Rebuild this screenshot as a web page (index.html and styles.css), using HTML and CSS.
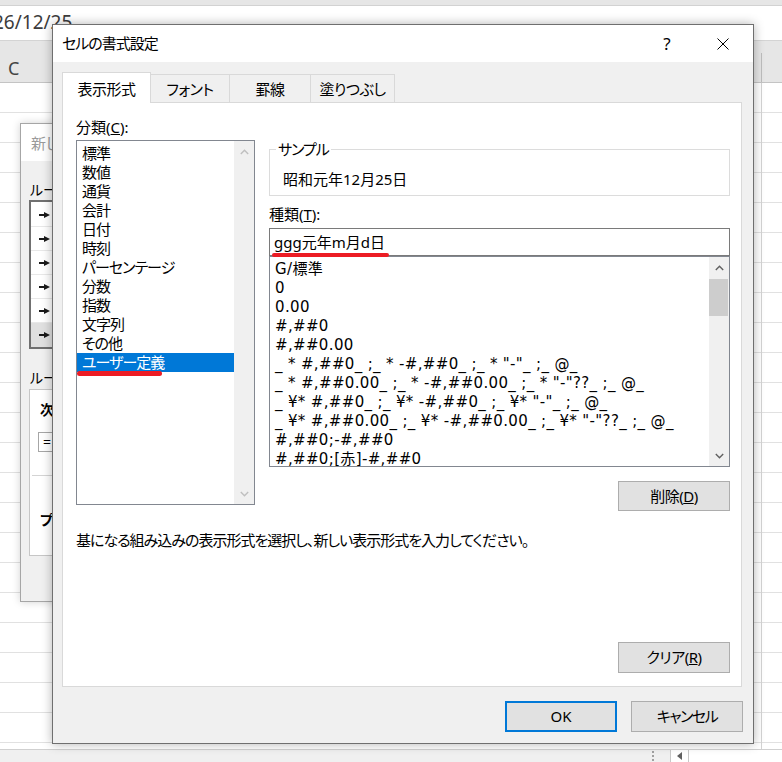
FILE: index.html
```html
<!DOCTYPE html>
<html lang="ja">
<head>
<meta charset="utf-8">
<title>セルの書式設定</title>
<link rel="stylesheet" href="styles.css">
</head>
<body>
<div class="sheet">
  <div class="topstrip"></div>
  <div class="formulabar"><span class="fx">26/12/25</span></div>
  <div class="colheader"><span class="colname">C</span></div>
  <div class="cells"></div>
  <div class="tabbar">
    <span class="splitter"><i></i><i></i><i></i></span>
    <span class="hs-btn"><svg width="5" height="8" viewBox="0 0 5 8"><path d="M5 0 L0 4 L5 8Z" fill="#606060"/></svg></span>
    <span class="hscroll"></span>
  </div>
</div>

<div class="bgdlg">
  <div class="bgdlg-title">新しい書式ルール</div>
  <div class="bgdlg-body">
    <div class="bg-label">ルールの種類を選択してください(<u>S</u>):</div>
    <ul class="rule-list">
      <li><svg class="rarrow" width="12" height="6" viewBox="0 0 12 6"><rect x="0" y="2" width="6" height="2"/><path d="M5 0 L11 3 L5 6Z"/></svg>セルの値に基づいてすべてのセルを書式設定</li>
      <li><svg class="rarrow" width="12" height="6" viewBox="0 0 12 6"><rect x="0" y="2" width="6" height="2"/><path d="M5 0 L11 3 L5 6Z"/></svg>指定の値を含むセルだけを書式設定</li>
      <li><svg class="rarrow" width="12" height="6" viewBox="0 0 12 6"><rect x="0" y="2" width="6" height="2"/><path d="M5 0 L11 3 L5 6Z"/></svg>上位または下位に入る値だけを書式設定</li>
      <li><svg class="rarrow" width="12" height="6" viewBox="0 0 12 6"><rect x="0" y="2" width="6" height="2"/><path d="M5 0 L11 3 L5 6Z"/></svg>平均より上または下の値だけを書式設定</li>
      <li><svg class="rarrow" width="12" height="6" viewBox="0 0 12 6"><rect x="0" y="2" width="6" height="2"/><path d="M5 0 L11 3 L5 6Z"/></svg>一意の値または重複する値だけを書式設定</li>
      <li class="sel"><svg class="rarrow" width="12" height="6" viewBox="0 0 12 6"><rect x="0" y="2" width="6" height="2"/><path d="M5 0 L11 3 L5 6Z"/></svg>数式を使用して、書式設定するセルを決定</li>
    </ul>
    <div class="bg-label second">ルールの内容を編集してください(<u>E</u>):</div>
    <div class="rule-edit">
      <div class="bold">次の数式を満たす場合に値を書式設定(<u>O</u>):</div>
      <div class="formula">=</div>
      <div class="divider"></div>
      <div class="bold preview">プレビュー:</div>
    </div>
  </div>
</div>

<div class="dlg">
  <div class="dlg-title">
    <span class="title-text">セルの書式設定</span>
    <span class="tb-btn help">?</span>
    <span class="tb-btn close"><svg width="12" height="12" viewBox="0 0 12 12"><path d="M0.5 0.5 L11.5 11.5 M11.5 0.5 L0.5 11.5" stroke="#000" stroke-width="1" fill="none"/></svg></span>
  </div>
  <div class="dlg-body">
    <div class="tabs">
      <div class="tab active">表示形式</div>
      <div class="tab">フォント</div>
      <div class="tab">罫線</div>
      <div class="tab">塗りつぶし</div>
    </div>
    <div class="panel">
      <div class="panel-top">
        <div class="cat-col">
          <div class="label">分類(<u>C</u>):</div>
          <div class="listbox cat-list">
            <ul class="items">
              <li>標準</li>
              <li>数値</li>
              <li>通貨</li>
              <li>会計</li>
              <li>日付</li>
              <li>時刻</li>
              <li>パーセンテージ</li>
              <li>分数</li>
              <li>指数</li>
              <li>文字列</li>
              <li>その他</li>
              <li class="sel">ユーザー定義</li>
            </ul>
            <div class="vscroll disabled">
              <span class="sb-btn"><svg width="9" height="6" viewBox="0 0 9 6"><path d="M0.8 5 L4.5 1.3 L8.2 5" fill="none" stroke="currentColor" stroke-width="1.4"/></svg></span>
              <span class="sb-track"></span>
              <span class="sb-btn"><svg width="9" height="6" viewBox="0 0 9 6"><path d="M0.8 1 L4.5 4.7 L8.2 1" fill="none" stroke="currentColor" stroke-width="1.4"/></svg></span>
            </div>
          </div>
        </div>
        <div class="fmt-col">
          <fieldset class="sample">
            <legend>サンプル</legend>
            <div class="sample-text">昭和元年12月25日</div>
          </fieldset>
          <div class="label type-label">種類(<u>T</u>):</div>
          <div class="input"><span class="mark">ggg元年m月d日</span></div>
          <div class="listbox fmt-list">
            <ul class="items">
              <li>G/標準</li>
              <li>0</li>
              <li>0.00</li>
              <li>#,##0</li>
              <li>#,##0.00</li>
              <li>_ * #,##0_ ;_ * -#,##0_ ;_ * "-"_ ;_ @_</li>
              <li>_ * #,##0.00_ ;_ * -#,##0.00_ ;_ * "-"??_ ;_ @_</li>
              <li>_ ¥* #,##0_ ;_ ¥* -#,##0_ ;_ ¥* "-"_ ;_ @_</li>
              <li>_ ¥* #,##0.00_ ;_ ¥* -#,##0.00_ ;_ ¥* "-"??_ ;_ @_</li>
              <li>#,##0;-#,##0</li>
              <li>#,##0;[赤]-#,##0</li>
              <li>¥#,##0;¥-#,##0</li>
              <li>¥#,##0;[赤]¥-#,##0</li>
            </ul>
            <div class="vscroll">
              <span class="sb-btn"><svg width="9" height="6" viewBox="0 0 9 6"><path d="M0.8 5 L4.5 1.3 L8.2 5" fill="none" stroke="currentColor" stroke-width="1.4"/></svg></span>
              <span class="sb-track"><span class="sb-thumb"></span></span>
              <span class="sb-btn"><svg width="9" height="6" viewBox="0 0 9 6"><path d="M0.8 1 L4.5 4.7 L8.2 1" fill="none" stroke="currentColor" stroke-width="1.4"/></svg></span>
            </div>
          </div>
          <div class="btn-row"><button class="btn">削除(<u>D</u>)</button></div>
        </div>
      </div>
      <p class="desc">基になる組み込みの表示形式を選択し、新しい表示形式を入力してください。</p>
      <div class="btn-row clear-row"><button class="btn tall">クリア(<u>R</u>)</button></div>
    </div>
    <div class="dlg-buttons">
      <button class="btn tall ok">OK</button>
      <button class="btn tall narrow">キャンセル</button>
    </div>
  </div>
</div>
</body>
</html>
```

FILE: styles.css
```css
* { box-sizing: border-box; }
html, body { margin: 0; padding: 0; }
body {
  width: 782px;
  height: 762px;
  overflow: hidden;
  position: relative;
  background: #fff;
  font-family: "Noto Sans", "Noto Sans CJK JP", sans-serif;
  font-size: 15px;
  line-height: 19px;
  color: #000;
  font-feature-settings: "palt";
}
ul { margin: 0; padding: 0; list-style: none; }

/* ---------- spreadsheet background ---------- */
.sheet { display: flex; flex-direction: column; height: 762px; }
.topstrip { height: 6px; background: #e6e6e6; border-bottom: 1px solid #d2d2d2; }
.formulabar { height: 35px; border-bottom: 1px solid #d4d4d4; overflow: hidden; }
.fx {
  display: block;
  margin-left: -7px;
  padding-top: 7px;
  font-size: 19px;
  line-height: 19px;
  color: #3c3c3c;
}
.colheader {
  height: 42px;
  background:
    linear-gradient(to right, transparent 761px, #bdbdbd 761px, #bdbdbd 762px, transparent 762px) 0 12px no-repeat,
    #e6e6e6;
  border-bottom: 1px solid #c4c4c4;
  padding: 18px 0 0 8px;
}
.colname { display: block; font-size: 18px; line-height: 18px; color: #444; }
.cells {
  flex: 1;
  background:
    linear-gradient(to right, transparent 761px, #d4d4d4 761px, #d4d4d4 762px, transparent 762px),
    repeating-linear-gradient(to bottom, #fff 0, #fff 29px, #e1e1e1 29px, #e1e1e1 30px);
}
.tabbar {
  height: 13px;
  border-top: 1px solid #d0d0d0;
  background: #f0f0f0;
  display: flex;
  justify-content: flex-end;
}
.splitter {
  width: 6px;
  margin-right: 14px;
  display: flex;
  flex-direction: column;
  align-items: center;
  justify-content: center;
  gap: 2px;
}
.splitter i { display: block; width: 2px; height: 2px; background: #a0a0a0; }
.hs-btn {
  width: 19px;
  background: #fff;
  border-left: 1px solid #c8c8c8;
  border-right: 1px solid #c8c8c8;
  display: flex;
  align-items: center;
  justify-content: center;
}
.hscroll { width: 93px; background: #fff; }

/* ---------- background dialog (only its left edge shows) ---------- */
.bgdlg {
  position: absolute;
  left: 20px;
  top: 123px;
  width: 40px;
  height: 479px;
  overflow: hidden;
  border: 1px solid #a6a6a6;
  border-right: 0;
  background: #f0f0f0;
  box-shadow: 0 0 8px rgba(0, 0, 0, 0.18);
  display: flex;
  flex-direction: column;
  font-size: 14px;
  white-space: nowrap;
}
.bgdlg-title {
  height: 37px;
  flex: none;
  background: #fff;
  padding: 10px 0 0 10px;
  color: #9a9a9a;
  font-size: 15px;
}
.bgdlg-body { padding: 19px 0 0 9px; }
.rule-list {
  margin: 1px 0 0 -1px;
  width: 440px;
  border: 2px solid #707070;
  background: #fff;
  padding-top: 1px;
}
.rule-list li {
  height: 24px;
  border-bottom: 1px solid #e8e8e8;
  display: flex;
  align-items: center;
  gap: 6px;
  padding-left: 8px;
}
.rule-list li.sel { background: #e0e0e0; border-bottom: 0; }
.rarrow { fill: #1a1a1a; flex: none; }
.bg-label.second { margin-top: 19px; }
.rule-edit {
  margin: 2px 0 0 -1px;
  width: 440px;
  height: 167px;
  border: 1px solid #c6c6c6;
  background: #fff;
  padding: 10px 0 0 10px;
}
.bold { font-weight: bold; }
.formula {
  margin: 13px 0 0 -2px;
  width: 400px;
  height: 20px;
  border: 1px solid #a6a6a6;
  padding-left: 4px;
  line-height: 18px;
}
.divider { margin: 23px 0 0 -8px; border-top: 1px solid #d4d4d4; }
.preview { margin-top: 34px; }

/* ---------- main dialog ---------- */
.dlg {
  position: absolute;
  left: 52px;
  top: 24px;
  width: 702px;
  height: 720px;
  border: 1px solid #6f6f6f;
  background: #f0f0f0;
  box-shadow: 0 0 10px rgba(0, 0, 0, 0.3);
  display: flex;
  flex-direction: column;
}
.dlg-title {
  height: 37px;
  flex: none;
  background: #fff;
  display: flex;
  align-items: center;
  padding: 0 7px 0 9px;
}
.title-text { flex: 1; letter-spacing: -1px; }
.tb-btn {
  width: 46px;
  height: 37px;
  display: flex;
  align-items: center;
  justify-content: center;
}
.help { margin-right: 10px; font-size: 17px; }
.dlg-body {
  flex: 1;
  display: flex;
  flex-direction: column;
  padding: 10px 11px 11px 9px;
}
.tabs { display: flex; align-items: flex-end; height: 30px; }
.tab {
  height: 28px;
  border: 1px solid #d9d9d9;
  border-bottom: 0;
  background: #f0f0f0;
  text-align: center;
  padding-top: 5px;
  margin-left: -1px;
  letter-spacing: -0.5px;
}
.tab:nth-child(1) { width: 89px; margin-left: 0; }
.tab:nth-child(2) { width: 80px; }
.tab:nth-child(3) { width: 82px; }
.tab:nth-child(4) { width: 85px; }
.tab.active {
  height: 31px;
  margin-bottom: -1px;
  background: #fff;
  position: relative;
  z-index: 1;
  padding-top: 7px;
}
.panel {
  height: 585px;
  flex: none;
  border: 1px solid #d9d9d9;
  background: #fff;
  display: flex;
  flex-direction: column;
  padding: 15px 11px 13px 13px;
}
.panel-top { display: flex; gap: 14px; }
.cat-col { width: 179px; }
.cat-list { margin-top: 3px; height: 365px; }
.fmt-col { width: 461px; padding-top: 22px; }

.listbox {
  border: 1px solid #828790;
  background: #fff;
  display: flex;
  overflow: hidden;
}
.items { flex: 1; padding-top: 3px; min-width: 0; }
.items li { padding-left: 5px; white-space: pre; }
.cat-list .items li { letter-spacing: -1px; }
.cat-list .items li.sel { background: #0078d7; color: #fff; position: relative; }
.cat-list .items li.sel::after {
  content: "";
  position: absolute;
  left: 0;
  width: 85px;
  bottom: -4px;
  height: 5px;
  border-radius: 3px;
  background: #ec1c24;
}
.fmt-list .items li {
  font-family: "DejaVu Sans", "Noto Sans CJK JP", sans-serif;
  letter-spacing: 0.35px;
}
.vscroll {
  width: 20px;
  flex: none;
  background: #f0f0f0;
  display: flex;
  flex-direction: column;
  color: #606060;
}
.vscroll.disabled { color: #bfbfbf; }
.sb-btn { height: 21px; display: flex; align-items: center; justify-content: center; }
.sb-track { flex: 1; padding-top: 1px; }
.sb-thumb { display: block; height: 37px; margin-right: 1px; background: #cdcdcd; }

.sample {
  margin: 0;
  border: 1px solid #dcdcdc;
  padding: 11px 0 6px 13px;
}
.sample legend { padding: 0 2px; margin-left: -7px; letter-spacing: -1px; }
.type-label { margin-top: 9px; }
.input {
  margin-top: 4px;
  height: 28px;
  border: 1px solid #7a7a7a;
  display: flex;
  align-items: center;
  padding-left: 4px;
}
.mark { display: block; position: relative; }
.mark::after {
  content: "";
  position: absolute;
  left: -2px;
  right: -4px;
  top: 20px;
  height: 4px;
  border-radius: 2px;
  background: #ec1c24;
}
.fmt-list { height: 211px; }
.btn-row { display: flex; justify-content: flex-end; margin-top: 14px; }
.btn {
  font: inherit;
  font-feature-settings: "palt";
  color: #000;
  width: 112px;
  height: 30px;
  padding: 0;
  background: #e1e1e1;
  border: 1px solid #adadad;
  letter-spacing: -0.5px;
}
.btn.narrow { letter-spacing: -1.5px; }
.btn.tall { height: 31px; }
.btn.ok { border: 2px solid #0078d7; letter-spacing: 0; }
.desc { margin: 20px 0 0; letter-spacing: -1px; }
.clear-row { margin-top: auto; }
.dlg-buttons {
  display: flex;
  justify-content: flex-end;
  gap: 14px;
  margin: 14px -1px 0 0;
}
```
